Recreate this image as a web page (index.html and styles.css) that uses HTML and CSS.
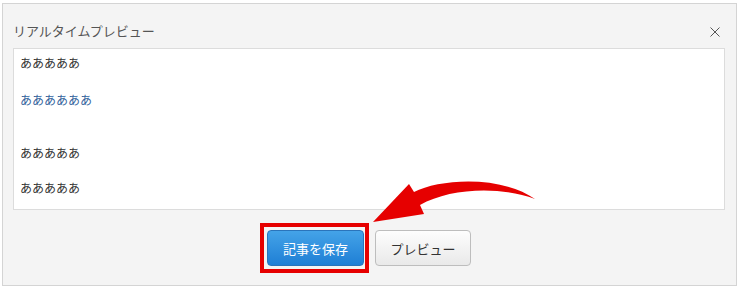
FILE: index.html
```html
<!DOCTYPE html>
<html lang="ja">
<head>
    <meta charset="UTF-8">
    <title>リアルタイムプレビュー</title>
    <link rel="stylesheet" href="styles.css">
</head>
<body>
    <div class="panel">
        <div class="panel-head">
            <span class="panel-title">リアルタイムプレビュー</span>
            <svg class="close" width="10" height="10" viewBox="0 0 10 10">
                <path d="M0.5 0.5 L9.5 9.5 M9.5 0.5 L0.5 9.5" stroke="#555" stroke-width="1" fill="none"/>
            </svg>
        </div>
        <div class="preview">
            <p class="first">あああああ</p>
            <p class="link gap">ああああああ</p>
            <p>あああああ</p>
            <p>あああああ</p>
        </div>
        <div class="actions">
            <button class="btn btn-primary marked">記事を保存</button>
            <button class="btn">プレビュー</button>
        </div>
    </div>

    <svg class="arrow" width="740" height="288" viewBox="0 0 740 288">
        <path d="M373 222 L409 184 L414 192 C440 179 500 175 535 199 C500 186 450 188 420 205 L424 214 Z" fill="#e60000"/>
    </svg>
</body>
</html>
```

FILE: styles.css
```css
body {
    margin: 0;
    background: #fff;
    font-family: "Noto Sans CJK JP", "Liberation Sans", sans-serif;
    color: #333;
}
.panel {
    box-sizing: border-box;
    width: 735px;
    height: 283px;
    margin: 3px 0 0 2px;
    padding: 0 11px 0 10px;
    background: #f4f4f4;
    border: 1px solid #d4d4d4;
}
.panel-head {
    display: flex;
    justify-content: space-between;
    align-items: center;
    height: 18px;
    padding-top: 18px;
    margin-bottom: 8px;
}
.panel-title {
    font-size: 13px;
    line-height: 18px;
    color: #555;
}
.close {
    margin: 2px 5px 0 0;
}
.preview {
    box-sizing: border-box;
    height: 162px;
    padding: 5px 6px;
    background: #fff;
    border: 1px solid #dcdcdc;
}
.preview p {
    margin: 0 0 17px;
    font-size: 12px;
    line-height: 18px;
}
.preview p.first {
    margin-bottom: 19px;
}
.preview p.gap {
    margin-bottom: 35px;
}
.link {
    color: #33629c;
}
.actions {
    display: flex;
    justify-content: center;
    gap: 11px;
    padding-top: 20px;
}
.btn {
    box-sizing: border-box;
    width: 96px;
    height: 36px;
    padding: 0;
    font-family: inherit;
    font-size: 13px;
    color: #333;
    background: linear-gradient(#fdfdfd, #e9e9e9);
    border: 1px solid #bdbdbd;
    border-radius: 4px;
}
.btn-primary {
    width: 97px;
    color: #fff;
    background: linear-gradient(#44a3e8, #1f7fd5);
    border-color: #2a74bb;
}
.marked {
    position: relative;
}
/* red annotation frame drawn over the save button */
.marked::after {
    content: "";
    position: absolute;
    top: -8px;
    left: -8px;
    right: -6px;
    bottom: -8px;
    border: 4px solid #e60000;
    pointer-events: none;
}
.arrow {
    position: absolute;
    top: 0;
    left: 0;
    pointer-events: none;
}
```
